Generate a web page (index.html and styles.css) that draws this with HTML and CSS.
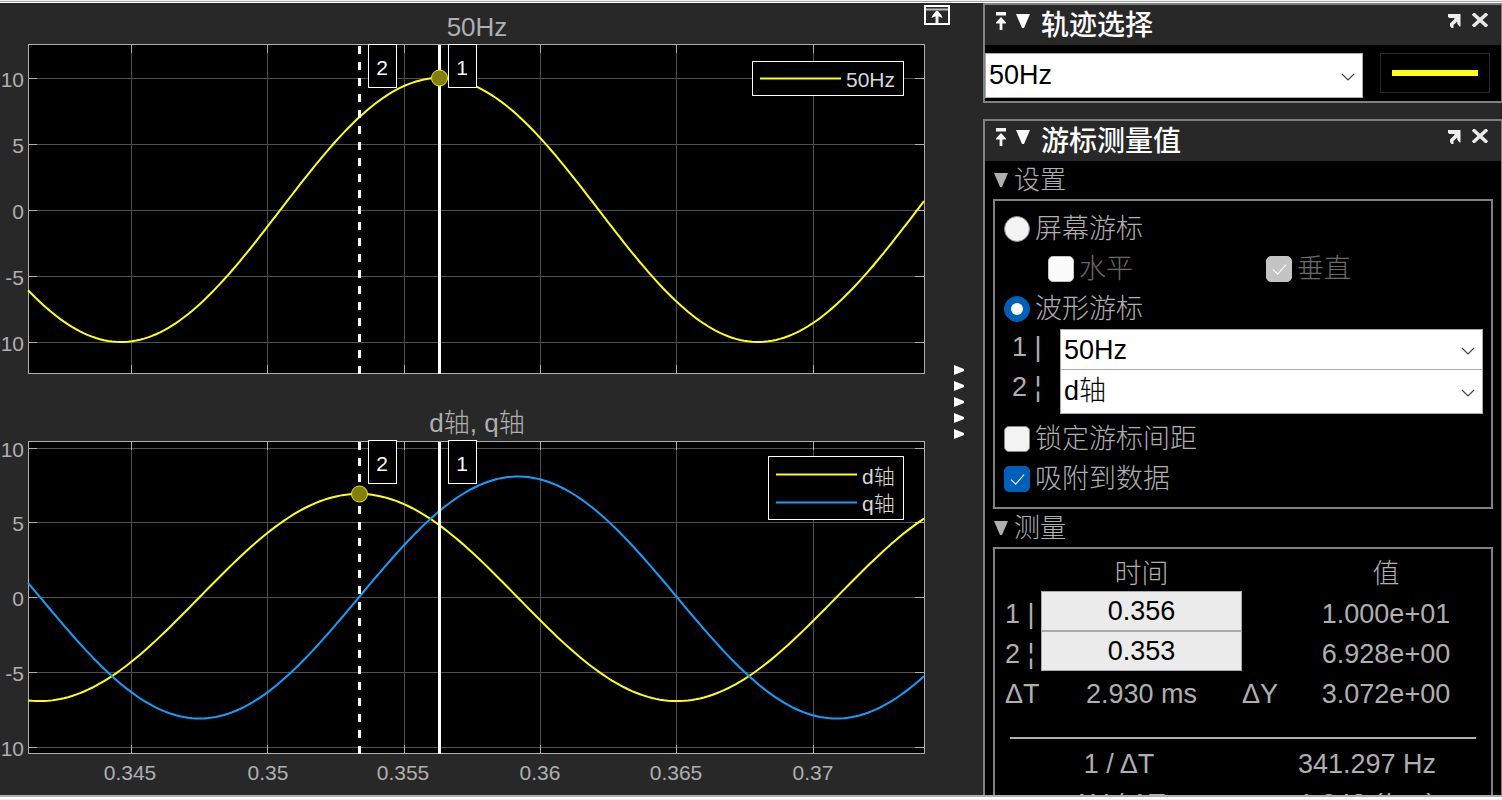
FILE: index.html
```html
<!DOCTYPE html>
<html lang="zh-CN">
<head>
<meta charset="utf-8">
<title>Scope</title>
<link rel="stylesheet" href="styles.css">
</head>
<body>
<svg class="sprite" aria-hidden="true">
  <symbol id="pin" viewBox="0 0 10 18"><path d="M0 0h10v3.500H0zM5 5l5 5.500v1H6.400V18H3.600v-6.500H0v-1z" fill="#f4f4f4"/></symbol>
  <symbol id="tri" viewBox="0 0 14 14"><path d="M0 0h14L8 14H6z" fill="currentColor"/></symbol>
  <symbol id="pop" viewBox="0 0 13 14"><path d="M0 0h12.500v12.500h-1L9.200 9.500V7.500L5.500 11v3H3.500L2 12V9.500L6.500 5v-1H1.500L0 3z" fill="#eee"/></symbol>
  <symbol id="close" viewBox="0 0 16 14"><path d="M1 0.500l14 13M15 0.500l-14 13" stroke="#e8e8e8" stroke-width="3.400"/></symbol>
  <symbol id="chev" viewBox="0 0 14 8"><path d="M1 1l6 6 6-6" fill="none" stroke="#444" stroke-width="1.200"/></symbol>
  <symbol id="right" viewBox="0 0 10 10"><path d="M0 0l10 4v2L0 10z" fill="#fff"/></symbol>
</svg>
<div class="edge-top"></div>
<main class="scope">
  <section class="charts">
    <svg class="plots" viewBox="0 3 950 792" preserveAspectRatio="xMinYMin meet" role="img" aria-label="50Hz, d轴, q轴">
      <g id="plot-a"></g>
      <g id="plot-b"></g>
      <g class="ticks" text-anchor="middle">
        <text x="130" y="780">0.345</text><text x="268" y="780">0.35</text><text x="403" y="780">0.355</text>
        <text x="540" y="780">0.36</text><text x="676" y="780">0.365</text><text x="813" y="780">0.37</text>
      </g>
      <g class="legend">
        <rect x="752.5" y="61.5" width="151" height="34"/>
        <path class="key yellow" d="M760 78.500h81"/>
        <text x="846" y="87">50Hz</text>
        <rect x="768.5" y="456.5" width="135" height="63"/>
        <path class="key yellow" d="M776 474.500h81"/>
        <path class="key blue" d="M776 502.500h81"/>
        <text x="862" y="484">d轴</text>
        <text x="862" y="511">q轴</text>
      </g>
      <g class="title" text-anchor="middle">
        <text x="477" y="36">50Hz</text>
        <text x="477" y="432">d轴, q轴</text>
      </g>
    </svg>
    <button class="maximize" type="button" aria-label="最大化坐标区">
      <svg viewBox="0 0 26 20"><path d="M1 1h24v18H1z" fill="none" stroke="#fff" stroke-width="2"/><path d="M2 4.500h22" stroke="#bbb" stroke-width="2"/><path d="M13 6.500v12" stroke="#eee" stroke-width="3"/><path d="M7.500 13q1-4 5.500-7.500 4.500 3.500 5.500 7.500l-3.500-1.500h-4z" fill="#fff"/></svg>
    </button>
  </section>
  <button class="splitter" type="button" aria-label="隐藏面板">
    <svg><use href="#right"/></svg><svg><use href="#right"/></svg><svg><use href="#right"/></svg><svg><use href="#right"/></svg><svg><use href="#right"/></svg>
  </button>
  <aside class="side">
    <section class="panel">
      <header class="panel-head">
        <button class="icon pin" type="button" aria-label="固定"><svg><use href="#pin"/></svg></button>
        <button class="icon tri" type="button" aria-label="折叠"><svg><use href="#tri"/></svg></button>
        <h2>轨迹选择</h2>
        <button class="icon pop" type="button" aria-label="弹出"><svg><use href="#pop"/></svg></button>
        <button class="icon close" type="button" aria-label="关闭"><svg><use href="#close"/></svg></button>
      </header>
      <div class="trace">
        <div class="combo trace-combo"><select aria-label="轨迹"><option>50Hz</option></select><svg><use href="#chev"/></svg></div>
        <button class="swatch" type="button" aria-label="线型"><span></span></button>
      </div>
    </section>
    <section class="panel grow">
      <header class="panel-head">
        <button class="icon pin" type="button" aria-label="固定"><svg><use href="#pin"/></svg></button>
        <button class="icon tri" type="button" aria-label="折叠"><svg><use href="#tri"/></svg></button>
        <h2>游标测量值</h2>
        <button class="icon pop" type="button" aria-label="弹出"><svg><use href="#pop"/></svg></button>
        <button class="icon close" type="button" aria-label="关闭"><svg><use href="#close"/></svg></button>
      </header>
      <h3 class="group-title"><svg><use href="#tri"/></svg>设置</h3>
      <div class="group settings">
        <label class="opt"><input type="radio" name="cursor">屏幕游标</label>
        <div class="pair">
          <label class="opt dim"><input type="checkbox" disabled>水平</label>
          <label class="opt dim"><input type="checkbox" checked disabled>垂直</label>
        </div>
        <label class="opt"><input type="radio" name="cursor" checked>波形游标</label>
        <div class="source">
          <label for="c1">1 |</label>
          <div class="combo"><select id="c1"><option>50Hz</option></select><svg><use href="#chev"/></svg></div>
        </div>
        <div class="source last">
          <label for="c2">2 ¦</label>
          <div class="combo"><select id="c2"><option>d轴</option></select><svg><use href="#chev"/></svg></div>
        </div>
        <label class="opt"><input type="checkbox">锁定游标间距</label>
        <label class="opt"><input type="checkbox" checked>吸附到数据</label>
      </div>
      <h3 class="group-title"><svg><use href="#tri"/></svg>测量</h3>
      <div class="group measure">
        <table class="values">
          <colgroup><col class="c-name"><col class="c-time"><col class="c-delta"><col></colgroup>
          <tr><td></td><th scope="col">时间</th><td></td><th scope="col">值</th></tr>
          <tr><td class="name"><label for="t1">1 |</label></td><td class="field"><input id="t1" type="text" value="0.356"></td><td></td><td>1.000e+01</td></tr>
          <tr><td class="name"><label for="t2">2 ¦</label></td><td class="field"><input id="t2" type="text" value="0.353"></td><td></td><td>6.928e+00</td></tr>
          <tr><td class="name">ΔT</td><td>2.930 ms</td><td class="delta">ΔY</td><td>3.072e+00</td></tr>
        </table>
        <hr>
        <table class="values rates">
          <tr><td>1 / ΔT</td><td>341.297 Hz</td></tr>
          <tr><td>ΔY / ΔT</td><td>1.048 (/ms)</td></tr>
        </table>
      </div>
    </section>
  </aside>
</main>
<div class="edge-bottom"></div>
<script src="plots.js"></script>
</body>
</html>
```
FILE: plots.js
```js
const PERIOD = 637;
const LEFT = 28, RIGHT = 924;
const GRID_X = [131, 267, 404, 540, 676, 813];
const LABELS = ['10', '5', '0', '-5', '-10'];

function wave(mid, amp, peak, cls) {
  const pts = [];
  for (let x = LEFT; x <= RIGHT; x += 4) {
    pts.push(x + ',' + (mid - amp * Math.cos(2 * Math.PI * (x - peak) / PERIOD)).toFixed(2));
  }
  return `<polyline class="wave ${cls}" points="${pts.join(' ')}"/>`;
}

function tag(x, y, n) {
  return `<rect class="tag" x="${x}.5" y="${y}.5" width="28" height="43"/>` +
    `<text class="tag-text" x="${x + 14}" y="${y + 31}" text-anchor="middle">${n}</text>`;
}

function plot(id, top, bottom, ys, waves, marker, tagTop) {
  let grid = '', ticks = '', text = '';
  for (const x of GRID_X) {
    grid += `M${x}.5 ${top}V${bottom}`;
    ticks += `M${x}.5 ${top}v9M${x}.5 ${bottom}v-8`;
  }
  ys.forEach((y, i) => {
    grid += `M${LEFT} ${y}.5H${RIGHT}`;
    ticks += `M${LEFT} ${y}.5h9M${RIGHT} ${y}.5h-9`;
    text += `<text x="24" y="${y + 9}" text-anchor="end">${LABELS[i]}</text>`;
  });
  document.getElementById(id).innerHTML =
    `<rect class="area" x="${LEFT}" y="${top}" width="${RIGHT - LEFT}" height="${bottom - top}"/>` +
    `<path class="grid" d="${grid}"/><path class="axis" d="${ticks}"/>` +
    `<rect class="axis" x="${LEFT}.5" y="${top}.5" width="${RIGHT - LEFT}" height="${bottom - top}"/>` +
    waves +
    `<path class="cursor dashed" d="M359.500 ${bottom + 1}V${top + 1}"/>` +
    `<path class="cursor" d="M439.500 ${top + 1}V${bottom + 1}"/>` +
    tag(368, tagTop, 2) + tag(448, tagTop, 1) +
    `<circle class="marker" cx="${marker[0]}" cy="${marker[1]}" r="8"/>` +
    `<g class="ticks">${text}</g>`;
}

plot('plot-a', 44, 373, [78, 144, 210, 276, 342], wave(210, 132, 439.5, 'yellow'), [439.5, 78], 44);
plot('plot-b', 441, 753, [448, 522, 597, 672, 747],
  wave(597.5, 103.6, 358.5, 'yellow') + wave(597.5, 121, 518, 'blue'), [359.5, 494], 440);
```
FILE: styles.css
```css
* { box-sizing: border-box; }

body {
  margin: 0;
  height: 100vh;
  display: flex;
  flex-direction: column;
  overflow: hidden;
  background: #282828;
  color: #afafaf;
  font: 300 27px/40px "Liberation Sans", "Noto Sans CJK SC", sans-serif;
}

button { padding: 0; border: 0; background: none; }
.sprite { position: absolute; width: 0; height: 0; }

.edge-top {
  flex: none;
  height: 3px;
  background: linear-gradient(#f0f0f0 1px, #a0a8a0 1px 2px, #fff 2px);
}
.edge-bottom {
  flex: none;
  height: 5px;
  background: linear-gradient(#b0b0b0 2px, #fff 2px 4px, #f0f0f0 4px);
}

.scope {
  flex: 1;
  min-height: 0;
  display: grid;
  grid-template-columns: minmax(0, 1fr) 33px 519px;
  grid-template-rows: minmax(0, 1fr);
}

/* plots */
.charts { position: relative; min-width: 0; }
.plots { display: block; width: 100%; height: 100%; overflow: hidden; }
.area { fill: #000; }
.grid { stroke: #505050; }
.axis { fill: none; stroke: #afafaf; }
.wave, .key { fill: none; stroke-width: 2; }
.yellow { stroke: #ffff11; }
.blue { stroke: #139fff; }
.cursor { stroke: #fff; stroke-width: 3; }
.dashed { stroke-dasharray: 8 8; }
.tag { fill: #000; stroke: #fff; }
.marker { fill: #80800a; stroke: #e8e810; stroke-width: 1; }
.ticks text { font-size: 21px; fill: #afafaf; }
.tag-text { font-size: 21px; fill: #fff; }
.legend rect { fill: #000; stroke: #fff; }
.legend text { font-size: 21px; fill: #d9d9d9; }
.title text { font-size: 26px; fill: #afafaf; }

.maximize {
  position: absolute;
  top: 2px;
  right: 0;
  width: 26px;
  height: 20px;
}
.maximize svg { display: block; width: 26px; height: 20px; }

.splitter {
  display: flex;
  flex-direction: column;
  justify-content: center;
  gap: 6px;
  padding: 6px 0 0 4px;
}
.splitter svg { width: 10px; height: 10px; }

/* side panels */
.side {
  display: flex;
  flex-direction: column;
  gap: 16px;
  min-height: 0;
}
.panel {
  border: 2px solid #808080;
  border-right-width: 1px;
  background: #000;
}
.grow {
  flex: 1;
  min-height: 0;
  overflow: hidden;
  border-bottom: 0;
}
.panel-head {
  display: flex;
  align-items: flex-start;
  height: 40px;
  padding: 7px 13px 0 11px;
  background: #282828;
  color: #fff;
}
.panel-head h2 {
  flex: 1;
  margin: 0;
  font-size: 28px;
  line-height: 28px;
  font-weight: 500;
}
.icon svg { display: block; width: 100%; height: 100%; }
.icon { color: #fff; margin-top: 2px; height: 14px; }
.icon.pin { width: 10px; height: 18px; margin: 0 10px 0 0; }
.icon.tri { width: 14px; margin-right: 11px; }
.icon.pop { width: 13px; margin-right: 11px; }
.icon.close { width: 16px; margin-top: 1px; }

.trace {
  display: flex;
  gap: 17px;
  padding: 8px 11px 3px 0;
}
.combo { position: relative; flex: 1; height: 41px; }
.combo select {
  display: block;
  width: 100%;
  height: 100%;
  padding: 0 30px 0 3px;
  border: 1px solid #ababab;
  border-radius: 0;
  background: #fff;
  color: #000;
  font: inherit;
  appearance: none;
}
.combo svg {
  position: absolute;
  right: 8px;
  top: 45%;
  width: 14px;
  height: 8px;
  pointer-events: none;
}
.trace-combo { height: 45px; }
.trace-combo select { padding-bottom: 2px; }
.swatch {
  display: flex;
  align-items: center;
  width: 110px;
  height: 40px;
  padding: 0 11px;
  border: 1px solid #282828;
}
.swatch span { flex: 1; height: 6px; background: #ffff11; }

.group-title {
  display: flex;
  align-items: center;
  gap: 6px;
  height: 38px;
  margin: 0;
  padding-left: 9px;
  font-size: 26px;
  font-weight: 300;
}
.group-title svg { width: 14px; height: 14px; color: #afafaf; }
.group {
  margin: 0 8px;
  border: 2px solid #808080;
}
.settings { padding: 8px 8px 8px 9px; }

.opt {
  display: flex;
  align-items: center;
  gap: 5px;
  height: 40px;
}
.opt.dim { color: #6a6a6a; }
.opt input {
  flex: none;
  width: 26px;
  height: 26px;
  margin: 0;
  border: 1px solid #888;
  border-radius: 5px;
  background: #f3f3f3;
  appearance: none;
  display: grid;
  place-items: center;
}
.opt input[type="radio"] { border-radius: 50%; }
.opt input:checked { background: #005fb8; border-color: #005fb8; }
.opt input:disabled { background: #fbfbfb; border-color: #c4c4c4; }
.opt input:disabled:checked { background: #c4c4c4; }
.opt input[type="radio"]:checked::before {
  content: "";
  width: 12px;
  height: 12px;
  border-radius: 50%;
  background: #fff;
}
.opt input[type="checkbox"]:checked::before {
  content: "";
  width: 6px;
  height: 12px;
  margin-bottom: 3px;
  border: solid #fff;
  border-width: 0 1px 1px 0;
  transform: rotate(42deg);
}
.pair {
  display: grid;
  grid-template-columns: 218px 1fr;
  padding-left: 44px;
}

.source {
  display: flex;
  align-items: flex-start;
  height: 40px;
  padding-left: 8px;
}
.source label { width: 48px; line-height: 36px; }
.source.last { height: 50px; }
.source.last .combo { height: 45px; }
.source.last select { padding-bottom: 2px; }

.measure { padding-top: 2px; }
.values {
  width: 100%;
  border-collapse: collapse;
  table-layout: fixed;
}
.values td, .values th {
  height: 40px;
  padding: 6px 0 0;
  line-height: 34px;
  font-weight: 300;
  text-align: center;
  white-space: nowrap;
}
.c-name { width: 46px; }
.c-time { width: 201px; }
.c-delta { width: 39px; }
.values .name { padding-left: 10px; text-align: left; }
.values .delta { text-align: left; }
.values .field { padding: 0; }
.field input {
  display: block;
  width: 100%;
  height: 40px;
  padding: 0;
  border: 1px solid #a9a9ad;
  background: #ebebeb;
  color: #000;
  font: inherit;
  text-align: center;
}
.measure hr {
  height: 2px;
  margin: 26px 15px 2px;
  border: 0;
  background: #afafaf;
}
```
